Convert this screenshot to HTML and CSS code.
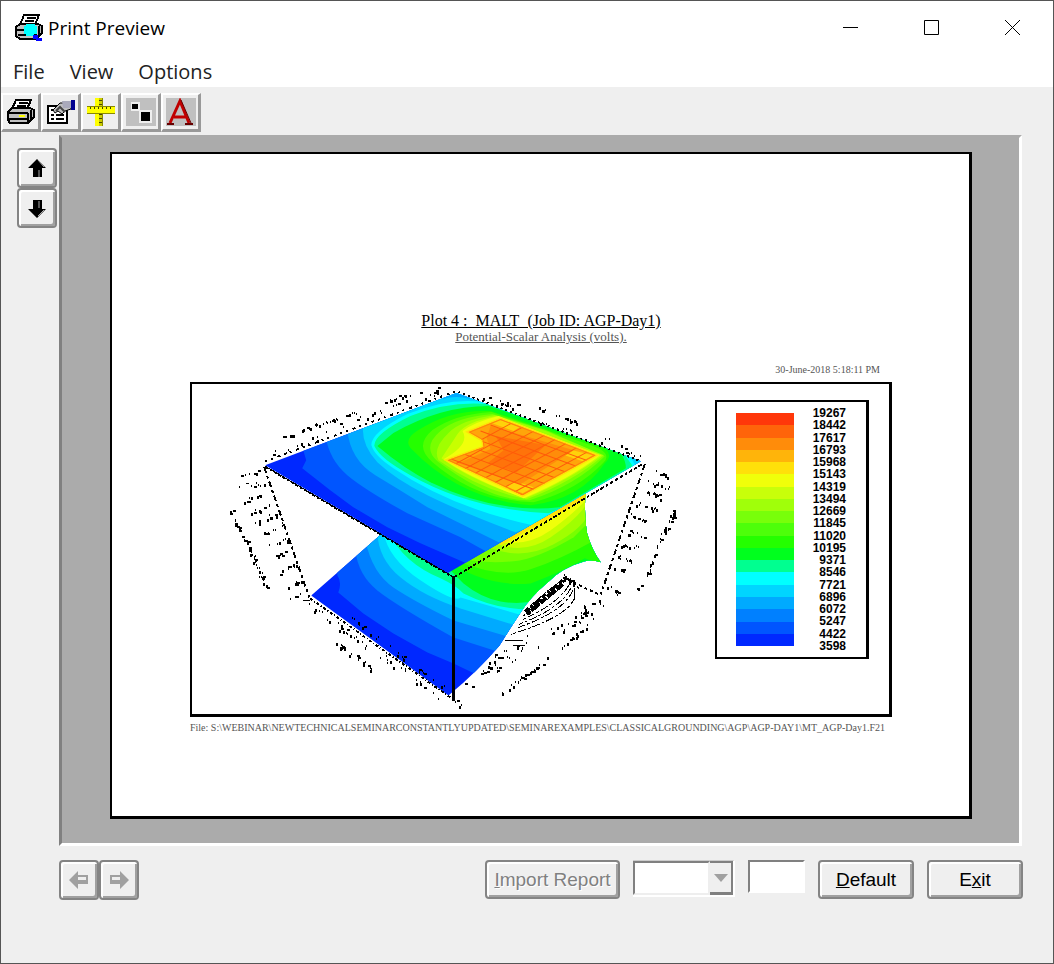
FILE: index.html
```html
<!DOCTYPE html>
<html lang="en">
<head>
<meta charset="utf-8">
<title>Print Preview</title>
<link rel="stylesheet" href="styles.css">
</head>
<body>
<div class="window">
  <header class="titlebar">
    <svg class="app-icon" viewBox="0 0 28 28" shape-rendering="crispEdges" aria-hidden="true">
      <path d="M9 1h15l-4 10H5z" fill="#fff" stroke="#000" stroke-width="2"/>
      <path d="M12 4h9M10 7h9" stroke="#000" stroke-width="2"/>
      <path d="M1 13l4-3h18l4 2v7l-6 6H5l-4-3z" fill="#c0c0c0" stroke="#000" stroke-width="2"/>
      <path d="M2 16h18M3 21h17M21 15v9M24 12v9" stroke="#000" stroke-width="2"/>
      <path d="M11 10h9v2h2v8h-3v2h-8v-2H9v-8h2z" fill="#0ff"/>
      <path d="M18 21h5v3h4v3h-6v-2h-3z" fill="#00f"/>
    </svg>
    <h1 class="title">Print Preview</h1>
    <div class="caption-buttons">
      <button aria-label="Minimize"><svg viewBox="0 0 16 16"><path d="M0 7.500h15"/></svg></button>
      <button aria-label="Maximize"><svg viewBox="0 0 16 16"><path d="M.5.5h14v14H.5z"/></svg></button>
      <button aria-label="Close"><svg viewBox="0 0 16 16"><path d="M0 0l15 15M15 0L0 15"/></svg></button>
    </div>
  </header>
  <nav class="menubar">
    <button>File</button><button>View</button><button>Options</button>
  </nav>
  <div class="toolbar">
    <button aria-label="Print"><svg viewBox="0 0 30 28" shape-rendering="crispEdges">
      <path d="M10 2h15l-4 9H6z" fill="#fff" stroke="#000" stroke-width="2"/><path d="M13 5h9M11 8h9" stroke="#000" stroke-width="2"/>
      <path d="M2 14l4-4h18l4 2v7l-6 6H4l-2-3z" fill="#c0c0c0" stroke="#000" stroke-width="2"/><path d="M3 15h19M3 21h19M22 15v10M25 12v9" stroke="#000" stroke-width="2"/><path d="M13 18h6" stroke="#ff0" stroke-width="2"/></svg></button>
    <button aria-label="Page setup"><svg viewBox="0 0 30 28">
      <path d="M2 8h19v17H2z" fill="#fff" stroke="#000" stroke-width="2"/><path d="M5 17h3M10 17h8M5 21h3M10 21h8M5 12h3" stroke="#000" stroke-width="2"/>
      <path d="M7 12l7-7h11v6l-6 2-3 3-4-3-3 2z" fill="#c0c0c0" stroke="#000"/><path d="M10 13l4-4 5 5" fill="none" stroke="#444" stroke-width="2"/><path d="M16 3h9v7h-8z" fill="#aab"/><path d="M25 2h4v10h-4z" fill="#000090"/></svg></button>
    <button aria-label="Rulers"><svg viewBox="0 0 30 28" shape-rendering="crispEdges">
      <path d="M9 0h7v28H9z" fill="#cc0"/><path d="M9 0h4v28H9z" fill="#ff0"/><path d="M1 8h28v7H1z" fill="#ff0"/><path d="M1 15h28M1 8h28M16 0v8M16 15v13" stroke="#880"/><path d="M4 10h24" stroke="#440" stroke-width="2" stroke-dasharray="1 3"/><path d="M14 2v6M14 16v12" stroke="#440" stroke-width="3" stroke-dasharray="1 3"/></svg></button>
    <button aria-label="Scale"><svg viewBox="0 0 30 28"><path fill="#c0c0c0" d="M0 0h30v28H0z"/><path fill="#eee" d="M5 4h9v9H5zM13 12h13v13H13z"/><path d="M6 6h6v5H6zM15 14h9v9h-9z"/></svg></button>
    <button aria-label="Fonts"><svg viewBox="0 0 30 28"><path fill="#c0c0c0" d="M0 0h30v28H0z"/><path d="M4 25L14 3l9 22M8 19h13" fill="none" stroke="#c00000" stroke-width="3"/><path d="M1 26h7M19 26h8" stroke="#600" stroke-width="2"/><path d="M15 2l10 23" stroke="#600"/></svg></button>
  </div>
  <main class="workspace">
    <div class="side">
      <button class="bevel arrow" aria-label="Scroll up"><svg viewBox="0 0 20 20"><path d="M10 1l9 9h-4v9H6v-9H1z"/><path d="M12 12v7M11 2l6 7" stroke="#aaa" fill="none"/></svg></button>
      <button class="bevel arrow" aria-label="Scroll down"><svg viewBox="0 0 20 20"><path d="M10 20l9-9h-4V2H6v9H1z"/><path d="M12 3v7M17 12l-6 6" stroke="#aaa" fill="none"/></svg></button>
    </div>
    <section class="viewer" aria-label="Page preview">
      <article class="paper">
        <h2 class="plot-title">Plot 4 :&nbsp; MALT&nbsp; (Job ID: AGP-Day1)</h2>
        <p class="plot-subtitle">Potential-Scalar Analysis (volts).</p>
        <p class="plot-date">30-June-2018 5:18:11 PM</p>
        <div class="frame">
          <svg class="plot" viewBox="192 384 522 329" role="img" aria-label="Potential surface plot">
            <defs>
              <clipPath id="upper"><path d="M265 465L456 393 640 461 447 573z"/></clipPath>
              <clipPath id="lower"><path d="M311 595L383 532 447 560 505 535 585 489Q583 512 586 532 591 550 600 562 592 559 584 561 562 567 547 582 530 596 520 612 507 632 499 645 477 671 448 695z"/></clipPath>
              <clipPath id="gridclip"><path d="M500 419L595 455 522 495 447 460 483 447 482 440 468 432z"/></clipPath>
            </defs>
            <g clip-path="url(#lower)">
              <path fill="#0028ff" d="M300 480h310v230H300z"/>
              <path fill="#0055ff" d="M337 575Q342 582 338 592L363 613 393 633 427 652 453 663 478 675 620 700V480H337z"/>
              <path fill="#0080ff" d="M355 550Q358 575 377 590T453 637L500 652 620 660V480H355z"/>
              <path fill="#00aaff" d="M365 540Q372 573 393 587T453 620L507 636 620 640V480H365z"/>
              <path fill="#00d5ff" d="M377 530Q377 558 400 577T460 608L515 625 620 630V480H377z"/>
              <path fill="#00ffff" d="M383 530Q386 557 420 580T460 597L522 615 620 620V480H383z"/>
              <path fill="#00ff90" d="M387 530Q402 562 440 578 455 585 463 593 497 610 533 609L620 600V480H387z"/>
              <path fill="#00ff1e" d="M440 560L463 583Q480 597 500 601T540 599L610 562V480H440z"/>
              <path fill="#24ff00" d="M446 560Q485 587 530 583 563 571 584 558L606 566V480H446z"/>
              <path fill="#4dff00" d="M455 560Q500 579 530 569T592 541V480H455z"/>
              <path fill="#78ff00" d="M468 560Q490 563 513 561T573 537L590 520V480H468z"/>
              <path fill="#a0ff00" d="M490 548Q523 560 553 544T590 510V480H490z"/>
              <path fill="#c8ff00" d="M497 544Q525 554 550 537T586 504V480H497z"/>
              <path fill="#f0ff0a" d="M500 542Q528 546 550 530T586 499V480H500z"/>
              <path fill="#ffe00a" d="M500 545L586 498V480L500 530z"/>
            </g>
            <g clip-path="url(#upper)">
              <path fill="#0028ff" d="M250 380h400v220H250z"/>
              <path fill="#0055ff" d="M300 440L306 460 302 468 330 490 353 507 387 527 420 543 468 564 660 480V380H300z"/>
              <path fill="#0080ff" d="M325 435Q329 460 347 475T407 513L460 537 487 552 660 480V380H325z"/>
              <path fill="#00aaff" d="M347 430Q350 460 375 475T427 507L498 542 660 480V380H347z"/>
              <path fill="#00d5ff" d="M363 424Q360 444 377 462 395 479 427 495T515 532L660 480V380H363z"/>
              <path fill="#00aaff" d="M448 390h16l6 9q-14-4-28 0z"/>
              <path fill="#00ffff" d="M484 402Q448 397 407 414 371 432 371 445 374 456 393 468 450 507 532 525L640 475 627 452z"/>
              <path fill="#00ff90" d="M486 404Q448 401 410 416 373 434 374 446 380 459 410 475 470 509 548 513L637 473 622 452z"/>
              <path fill="#00ff1e" d="M488 406Q440 406 393 433L377 446Q404 469 430 482 495 514 559 507L625 468Q625 454 610 446z"/>
              <path fill="#24ff00" d="M490 411Q450 409 418 430 403 439 410 448 460 500 530 505 580 499 604 463 616 452 595 444z"/>
              <path fill="#4dff00" d="M491 412Q455 414 432 430 413 446 432 462 476 500 533 502 577 490 603 462 612 453 590 445z"/>
              <path fill="#78ff00" d="M492 414Q456 417 440 431 421 447 437 461 490 501 529 500 575 485 604 456L545 430z"/>
              <path fill="#a0ff00" d="M494 415Q460 420 448 433 432 448 438 460 480 490 526 499 573 481 603 455L545 431z"/>
              <path fill="#c8ff00" d="M496 416Q465 422 457 434 452 442 441 458 470 480 525 498 570 479 601 455z"/>
              <path fill="#f0ff0a" d="M498 416Q474 422 462 431 470 444 443 459 470 478 523 498 570 478 599 455z"/>
              <path fill="#ffd20a" stroke="#ffe00a" stroke-width="3" d="M500 419L595 455 522 495 447 460 483 447 482 440 468 432z"/>
              <g clip-path="url(#gridclip)">
                <path fill="#ffa50a" d="M440 410h170v90H440z"/>
                <path fill="#ffd20a" d="M497 419l22 8-6 4-22-8zM572 450l20 5-10 6-18-6zM505 486l10-5 18 6-11 6z"/>
                <path fill="#ff8c0a" d="M490 426L573 450 520 484 458 463 490 449 486 438z"/>
                <path fill="#ff730a" d="M495 436L545 445 516 472 487 463 503 450z"/>
                <g id="grid-lines" fill="none" stroke="#ff5a0a"/>
                <path fill="none" stroke="#ff820a" stroke-width="2" d="M500 419L595 455 522 495 447 460 483 447 482 440 468 432z"/>
              </g>
            </g>
            <g fill="none" stroke="#000" shape-rendering="crispEdges">
              <path stroke-width="1" d="M265 466L452 576"/>
              <path stroke-width="1" stroke-dasharray="3 2" d="M265 467L452 577"/>
              <path stroke-width="2" d="M453 576V700"/>
              <path stroke-width="1" stroke-dasharray="3 2 4 2" d="M454 576L642 463M454 577L642 464"/>
              <path stroke-width="2" stroke-dasharray="2 4 2 5 3 4" d="M265 461L456 391"/>
              <path stroke-width="2" stroke-dasharray="2 3" d="M458 392L640 461"/>
              <path stroke-width="2" stroke-dasharray="6 3 3 3" d="M264 467L309 597M644 464L600 594"/>
              <path stroke-width="2" stroke-dasharray="3 2 1 2" d="M310 598L450 697"/>
              <path stroke-width="2" stroke-dasharray="3 3" d="M562 577L600 595"/>
              <path d="M574 588v12M504 640h18M512 645h12M246 483h3M303 600h7"/>
              <path stroke-dasharray="8 2 3 2" d="M566 578Q540 592 522 617M568 585Q557 604 520 620M570 588Q560 608 518 624M572 590Q564 611 515 628M574 597Q568 616 510 634"/>
              <path stroke-width="3" stroke-dasharray="5 2 9 1 3 2" d="M562 580L523 612"/>
              <path stroke-width="4" stroke-dasharray="8 1 11 1" d="M562 584L526 614"/>
              <path id="axis-marks" stroke-width="2"/>
            </g>
          </svg>
          <div class="legend">
            <div class="bars" id="bars"></div>
            <ol class="labels">
              <li>19267</li><li>18442</li><li>17617</li><li>16793</li><li>15968</li><li>15143</li><li>14319</li><li>13494</li><li>12669</li><li>11845</li><li>11020</li><li>10195</li><li>9371</li><li>8546</li><li>7721</li><li>6896</li><li>6072</li><li>5247</li><li>4422</li><li>3598</li>
            </ol>
          </div>
        </div>
        <p class="plot-file">File: S:\WEBINAR\NEWTECHNICALSEMINARCONSTANTLYUPDATED\SEMINAREXAMPLES\CLASSICALGROUNDING\AGP\AGP-DAY1\MT_AGP-Day1.F21</p>
      </article>
    </section>
  </main>
  <footer class="actions">
    <div class="pager">
      <button class="bevel arrow" disabled aria-label="Previous page"><svg viewBox="0 0 20 20"><path d="M0 10l9-9v4h10v9H9v5z"/><path d="M9 7h8v3H9" fill="#eee"/></svg></button>
      <button class="bevel arrow" disabled aria-label="Next page"><svg viewBox="0 0 20 20"><path d="M20 10l-9-9v4H1v9h10v5z"/><path d="M3 7h8v3H3" fill="#eee"/></svg></button>
    </div>
    <button class="bevel text import" disabled><u>I</u>mport Report</button>
    <div class="combo">
      <select aria-label="Report" disabled><option></option></select>
      <span class="combo-arrow"><svg viewBox="0 0 14 8"><path d="M0 0h14L7 8z"/></svg></span>
    </div>
    <input class="field" type="text" aria-label="Page number" disabled>
    <button class="bevel text"><u>D</u>efault</button>
    <button class="bevel text">E<u>x</u>it</button>
  </footer>
</div>
<script src="script.js"></script>
</body>
</html>
```

FILE: styles.css
```css
* { box-sizing: border-box; }
body { margin: 0; font-family: "Open Sans", "Noto Sans", sans-serif; color: #000; }
button { font: inherit; color: inherit; padding: 0; border: 0; background: none; }
h1, h2, p, ol { margin: 0; padding: 0; font-weight: 400; }

.window { display: flex; flex-direction: column; min-height: 100vh; border: 1px solid #555; background: #efefef; }

.titlebar { display: flex; align-items: center; height: 54px; padding-left: 14px; background: #fff; }
.app-icon { width: 28px; height: 28px; }
.title { flex: 1; margin-left: 5px; font-size: 19px; }
.caption-buttons { display: flex; }
.caption-buttons button { display: grid; place-items: center; width: 81px; height: 52px; }
.caption-buttons svg { width: 16px; height: 16px; fill: none; stroke: #000; }

.menubar { display: flex; gap: 25px; height: 32px; padding: 0 12px; background: #fff; font-size: 20px; line-height: 34px; color: #222; }

.toolbar { display: flex; padding: 6px 0 3px; }
.toolbar button { display: grid; place-items: center; width: 40px; height: 39px; border: solid; border-width: 2px 3px 3px 2px; border-color: #fff #999 #999 #fff; }
.toolbar svg { width: 30px; height: 28px; }

.workspace { display: flex; flex: 1; padding-right: 31px; }
.side { display: flex; flex-direction: column; width: 58px; padding: 13px 0 0 16px; }
.bevel { border: 2px solid #848484; border-radius: 4px; background: #efefef; box-shadow: inset 2px 2px 0 #fff, inset -2px -2px 0 #a0a0a0; }
.arrow { display: grid; place-items: center; width: 40px; height: 40px; }
.arrow svg { width: 20px; height: 20px; }
.arrow:disabled svg { fill: #a0a0a0; }

.viewer { display: flex; flex: 1; border: 3px solid; border-color: #ababab #fff #fff #808080; background: #ababab; }
.paper { display: flex; flex-direction: column; flex: 1; margin: 14px 47px 24px 48px; padding: 157px 77px 0 78px; border: solid #000; border-width: 2px 3px 3px 2px; background: #fff; font-family: "Liberation Serif", serif; }
.plot-title { text-align: center; font-size: 16px; line-height: 19px; text-decoration: underline; }
.plot-subtitle { text-align: center; font-size: 13px; line-height: 14px; text-decoration: underline; color: #555; }
.plot-date { margin-top: 19px; padding-right: 12px; text-align: right; font-size: 10px; line-height: 14px; color: #555; }
.plot-file { margin-top: 4px; font-size: 10px; line-height: 14px; white-space: nowrap; color: #555; }

.frame { display: flex; margin-top: 5px; padding-right: 20px; border: solid #000; border-width: 2px 3px 3px 2px; }
.plot { display: block; flex: 1; min-width: 0; }
.legend { display: flex; justify-content: space-between; align-self: flex-start; width: 154px; margin-top: 16px; padding: 5px 20px 5px 19px; border: solid #000; border-width: 2px 3px 2px 2px; }
.bars { display: flex; flex-direction: column; width: 58px; margin: 6px 0; }
.bars span { flex: 1; }
.labels { display: flex; flex-direction: column; justify-content: space-between; height: 245px; list-style: none; text-align: right; font: bold 12px/12px "Liberation Sans", sans-serif; }

.actions { display: flex; align-items: flex-start; gap: 13px; padding: 14px 30px 63px 58px; font: 19px "Liberation Sans", sans-serif; }
.pager { display: flex; flex: 1; }
.text { width: 96px; height: 39px; }
.text.import { width: 135px; }
.text:disabled { color: #808080; text-shadow: 1px 1px 0 #fff; }
.combo { display: flex; width: 102px; height: 37px; border: solid; border-width: 1px 2px 2px 0; border-color: #ccc #fff #fff #ccc; }
.combo select { flex: 1; min-width: 0; appearance: none; opacity: 1; border: solid; border-width: 2px; border-color: #808080 #eee #eee #808080; border-radius: 0; background: #fff; }
.combo-arrow { display: grid; place-items: center; width: 23px; border: solid #808080; border-width: 2px 2px 3px 0; }
.combo-arrow svg { width: 14px; height: 8px; fill: #a0a0a0; }
.field { width: 57px; height: 33px; border: solid; border-width: 2px; border-color: #808080 #fff #fff #808080; background: #fff; }
```

FILE: script.js
```js
const palette = ["#ff370a", "#ff640a", "#ff8c0a", "#ffb40a", "#ffe00a", "#f0ff0a", "#c8ff0a", "#a0ff0a", "#78ff0a", "#4dff0a", "#24ff00", "#00ff1e", "#00ff90", "#00ffff", "#00d5ff", "#00aaff", "#0080ff", "#0055ff", "#0028ff"];
const bars = document.getElementById("bars");
for (const color of palette) {
  const bar = document.createElement("span");
  bar.style.background = color;
  bars.append(bar);
}

let seed = 7;
const random = () => (seed = (seed * 16807) % 2147483647) / 2147483647;

// Each row: start x, start y, end x, end y, spread, number of marks.
const rows = [
  [282, 438, 300, 431, 2, 5], [302, 430, 362, 411, 1, 24], [382, 403, 406, 395, 1, 10],
  [272, 455, 330, 433, 3, 11], [340, 427, 382, 411, 3, 9], [388, 404, 440, 391, 4, 14],
  [480, 398, 520, 408, 3, 14], [535, 407, 577, 423, 2, 16], [535, 421, 582, 435, 3, 9], [590, 437, 645, 457, 4, 10],
  [230, 508, 244, 540, 3, 22], [246, 540, 268, 592, 3, 34],
  [236, 478, 262, 471, 1, 6], [239, 489, 265, 483, 2, 7], [246, 501, 268, 493, 2, 9], [252, 512, 272, 506, 2, 9],
  [255, 523, 278, 514, 2, 10], [264, 534, 284, 524, 2, 9], [268, 547, 289, 540, 2, 9], [276, 557, 291, 550, 2, 8],
  [280, 573, 299, 562, 2, 9], [286, 589, 302, 581, 2, 7], [291, 598, 306, 594, 2, 4],
  [653, 471, 670, 478, 2, 8], [647, 481, 668, 489, 2, 9], [640, 490, 666, 500, 2, 10], [635, 503, 656, 510, 2, 9],
  [630, 515, 650, 525, 2, 10], [625, 531, 646, 538, 2, 9], [619, 544, 638, 548, 2, 9], [614, 554, 630, 563, 2, 8],
  [609, 566, 624, 571, 2, 5], [605, 585, 618, 595, 2, 8],
  [676, 507, 662, 535, 3, 22], [661, 535, 646, 577, 2, 20], [634, 590, 641, 585, 2, 5],
  [310, 605, 350, 635, 3, 16], [353, 638, 395, 664, 3, 13], [400, 666, 442, 701, 3, 10], [336, 642, 372, 668, 2, 24],
  [350, 618, 445, 688, 3, 26], [450, 696, 461, 706, 2, 5], [562, 577, 577, 585, 4, 16],
  [502, 645, 484, 670, 5, 10], [530, 640, 462, 690, 7, 24], [600, 600, 575, 620, 6, 16], [590, 610, 532, 646, 5, 18],
  [597, 618, 545, 660, 2, 16], [542, 663, 500, 693, 2, 26]
];
let marks = "";
for (const [x1, y1, x2, y2, spread, count] of rows) {
  for (let i = 0; i < count; i++) {
    const t = random();
    const x = Math.round(x1 + (x2 - x1) * t + (random() - 0.5) * spread);
    const y = Math.round(y1 + (y2 - y1) * t + (random() - 0.5) * spread * 2);
    marks += random() < 0.7 ? `M${x} ${y}h${random() < 0.7 ? 1 : 3}` : `M${x} ${y}v3`;
  }
}
document.getElementById("axis-marks").setAttribute("d", marks);

const ns = "http://www.w3.org/2000/svg";
const grid = document.getElementById("grid-lines");
const line = (d) => {
  const path = document.createElementNS(ns, "path");
  path.setAttribute("d", d);
  grid.append(path);
};
for (let i = 1; i < 9; i++) line(`M${500 + i * 11} ${419 + i * 4}L${420 + i * 11} ${463 + i * 4}`);
for (let i = 1; i < 8; i++) line(`M${500 - i * 10} ${419 + i * 6}l120 44`);
```
